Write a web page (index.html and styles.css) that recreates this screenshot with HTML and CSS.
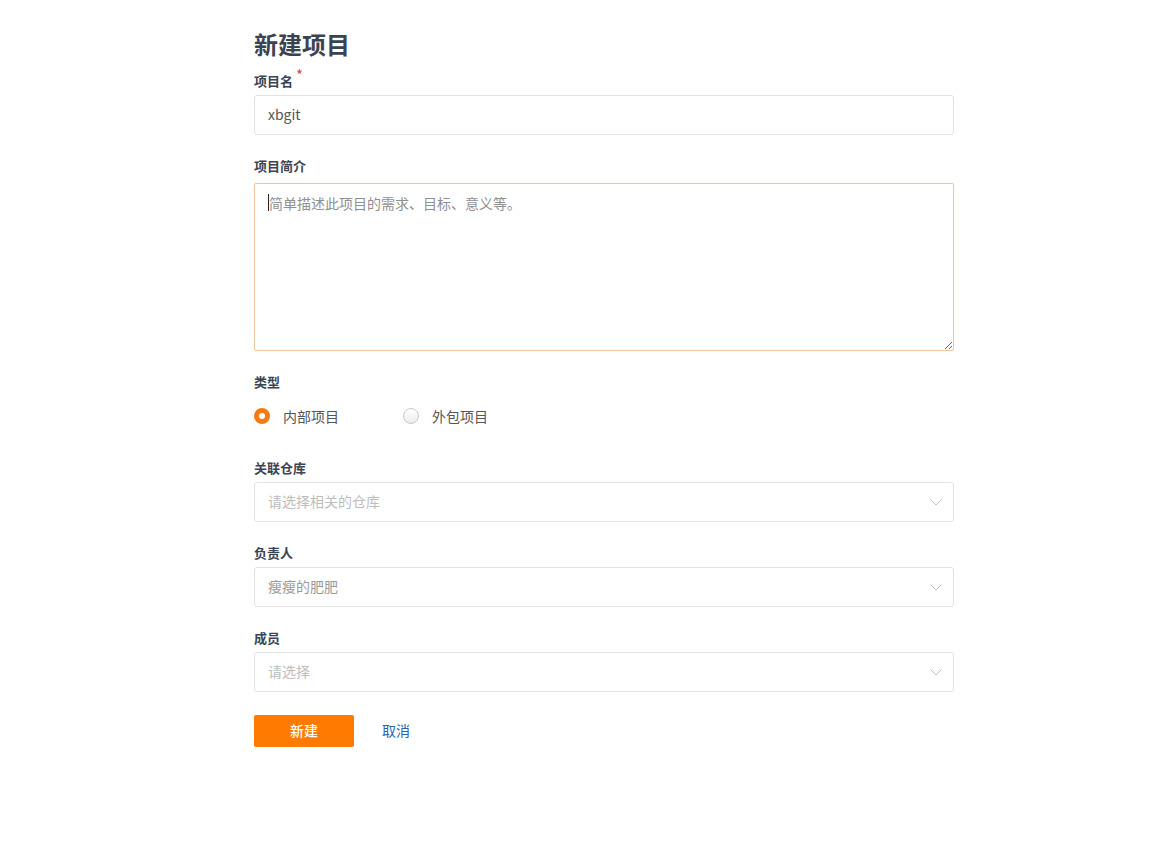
FILE: index.html
```html
<!DOCTYPE html>
<html lang="zh-CN">
<head>
<meta charset="utf-8">
<title>新建项目</title>
<link rel="stylesheet" href="styles.css">
</head>
<body>
<main class="page">
  <h1 class="title">新建项目</h1>
  <form class="form">
    <div class="field">
      <label class="label">项目名<span class="req">*</span></label>
      <div class="control"><span class="value">xbgit</span></div>
    </div>
    <div class="field">
      <label class="label label-ta">项目简介</label>
      <div class="textarea-wrap">
        <textarea class="textarea" placeholder="简单描述此项目的需求、目标、意义等。"></textarea>
        <span class="caret"></span>
      </div>
    </div>
    <div class="field field-radio">
      <label class="label">类型</label>
      <div class="radios">
        <div class="radio-item"><span class="radio checked"></span><span class="radio-text">内部项目</span></div>
        <div class="radio-item"><span class="radio"></span><span class="radio-text">外包项目</span></div>
      </div>
    </div>
    <div class="field">
      <label class="label">关联仓库</label>
      <div class="control select"><span class="placeholder">请选择相关的仓库</span>
        <svg class="chev" width="12" height="7" viewBox="0 0 12 7"><path d="M0.5 0.5 L6 6 L11.5 0.5" fill="none" stroke="#c4c4c4" stroke-width="1"/></svg>
      </div>
    </div>
    <div class="field">
      <label class="label">负责人</label>
      <div class="control select"><span class="placeholder dark">瘦瘦的肥肥</span>
        <svg class="chev" width="12" height="7" viewBox="0 0 12 7"><path d="M0.5 0.5 L6 6 L11.5 0.5" fill="none" stroke="#c4c4c4" stroke-width="1"/></svg>
      </div>
    </div>
    <div class="field">
      <label class="label">成员</label>
      <div class="control select"><span class="placeholder">请选择</span>
        <svg class="chev" width="12" height="7" viewBox="0 0 12 7"><path d="M0.5 0.5 L6 6 L11.5 0.5" fill="none" stroke="#c4c4c4" stroke-width="1"/></svg>
      </div>
    </div>
    <div class="actions">
      <button type="button" class="btn-primary">新建</button>
      <a class="btn-link">取消</a>
    </div>
  </form>
</main>
</body>
</html>
```

FILE: styles.css
```css
* { box-sizing: border-box; }
html, body { margin: 0; padding: 0; background: #fff; }
body {
  font-family: "Noto Sans CJK SC", "Microsoft YaHei", sans-serif;
  color: #3c4452;
}
.page {
  width: 700px;
  margin-left: 254px;
  padding-top: 28px;
}
.title {
  margin: 0 0 11px;
  font-size: 24px;
  line-height: 32px;
  font-weight: 700;
  color: #3b4250;
}
.form { display: flex; flex-direction: column; }
.field { display: flex; flex-direction: column; margin-bottom: 21px; }
.field-radio { margin-bottom: 22px; }
.label {
  display: block;
  height: 20px;
  font-size: 13px;
  line-height: 20px;
  font-weight: 700;
  color: #3c4452;
  margin-bottom: 4px;
}
.label-ta { margin-bottom: 7px; }
.req {
  color: #e0444a;
  font-size: 15px;
  line-height: 0;
  position: relative;
  top: -5px;
  margin-left: 3px;
  font-weight: 400;
}
.control {
  height: 40px;
  border: 1px solid #e3e3e3;
  border-radius: 3px;
  display: flex;
  align-items: center;
  padding: 0 14px 2px 13px;
  font-size: 14px;
}
.value { color: #555; }
.placeholder { color: #bdbdbd; }
.placeholder.dark { color: #9a9a9a; }
.select { justify-content: space-between; padding-right: 11px; }
.chev { display: block; margin-top: 2px; }
.textarea-wrap { position: relative; }
.textarea {
  display: block;
  width: 700px;
  height: 168px;
  border: 1px solid #f1c69e;
  border-radius: 2px;
  padding: 9px 14px;
  font-family: inherit;
  font-size: 14px;
  line-height: 20px;
  color: #555;
  resize: vertical;
  outline: none;
  box-shadow: 0 0 2px rgba(255, 160, 80, 0.15);
}
.textarea::placeholder { color: #8f8f8f; }
.caret {
  position: absolute;
  left: 14px;
  top: 11px;
  width: 1px;
  height: 17px;
  background: #222;
}
.radios { display: flex; align-items: center; height: 40px; padding-bottom: 1px; }
.radio-item { display: flex; align-items: center; width: 149px; }
.radio {
  width: 16px;
  height: 16px;
  border-radius: 50%;
  border: 1px solid #c9c9c9;
  background: linear-gradient(#ffffff, #ececec);
  margin-right: 13px;
  flex: none;
}
.radio.checked {
  border: 5px solid #f57a10;
  background: #fff;
}
.radio-text { font-size: 14px; color: #555; }
.actions { display: flex; align-items: center; margin-top: 2px; }
.btn-primary {
  width: 100px;
  height: 32px;
  border: none;
  border-radius: 2px;
  background: #ff7a00;
  color: #fff;
  font-family: inherit;
  font-size: 14px;
  font-weight: 500;
  padding: 0 0 2px;
}
.btn-link {
  margin-left: 28px;
  font-size: 14px;
  color: #2765a8;
  cursor: pointer;
  padding-bottom: 2px;
}
```
